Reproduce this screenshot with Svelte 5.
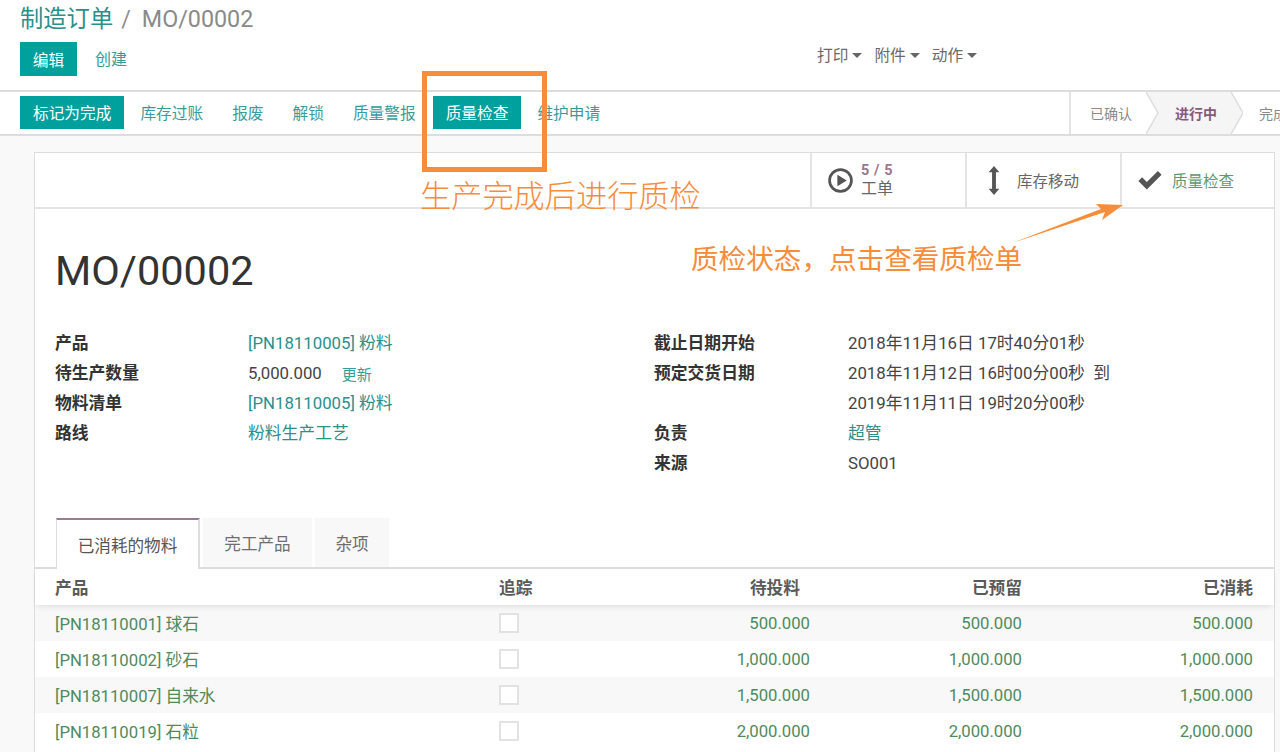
<script lang="ts">
  const buttons = ['库存过账', '报废', '解锁', '质量警报'];

  const leftFields = [
    { label: '产品', value: '[PN18110005] 粉料', link: true },
    { label: '待生产数量', value: '5,000.000', update: true },
    { label: '物料清单', value: '[PN18110005] 粉料', link: true },
    { label: '路线', value: '粉料生产工艺', link: true },
  ];

  const rightFields = [
    { label: '截止日期开始', value: '2018年11月16日 17时40分01秒' },
    { label: '预定交货日期', value: '2018年11月12日 16时00分00秒  到' },
    { label: '', value: '2019年11月11日 19时20分00秒' },
    { label: '负责', value: '超管', link: true },
    { label: '来源', value: 'SO001' },
  ];

  const rows = [
    { name: '[PN18110001] 球石', qty: '500.000' },
    { name: '[PN18110002] 砂石', qty: '1,000.000' },
    { name: '[PN18110007] 自来水', qty: '1,500.000' },
    { name: '[PN18110019] 石粒', qty: '2,000.000' },
  ];
</script>

<div class="page">
  <header class="control">
    <div class="crumbs">
      <span class="crumb-link">制造订单</span>
      <span class="crumb-sep">/</span>
      <span class="crumb-cur">MO/00002</span>
    </div>
    <div class="control-row">
      <div class="left-btns">
        <button class="btn primary edit">编辑</button>
        <button class="btn link">创建</button>
      </div>
      <div class="sidebar-menus">
        {#each ['打印', '附件', '动作'] as m}
          <span class="menu">{m}<i class="caret"></i></span>
        {/each}
      </div>
    </div>
  </header>

  <div class="statusbar">
    <div class="actions">
      <button class="btn primary act">标记为完成</button>
      {#each buttons as b}
        <button class="btn link act">{b}</button>
      {/each}
      <button class="btn primary act check">质量检查</button>
      <button class="btn link act">维护申请</button>
    </div>
    <div class="stages">
      <span class="stage first">已确认</span>
      <span class="stage current">
        <svg class="chevron" viewBox="0 0 97 42" width="97" height="42">
          <path d="M0 0 L12 21 L0 42 H85 L97 21 L85 0 Z" fill="#f5f5f5" />
          <path d="M0 0 L12 21 L0 42 M85 0 L97 21 L85 42" fill="none" stroke="#ddd" stroke-width="1.500" />
        </svg>
        <span class="stage-text">进行中</span>
      </span>
      <span class="stage last">完成</span>
    </div>
  </div>

  <main class="sheet-bg">
    <section class="sheet">
      <div class="button-box">
        <div class="stat">
          <svg class="ic" viewBox="0 0 24 24" width="25" height="25">
            <circle cx="12" cy="12" r="10.500" fill="none" stroke="#555" stroke-width="2.600" />
            <path d="M9 6.500 L18 12 L9 17.500 Z" fill="#555" />
          </svg>
          <span class="stat-text">
            <b class="stat-num">5 / 5</b>
            <span>工单</span>
          </span>
        </div>
        <div class="stat">
          <svg class="ic" viewBox="0 0 14 30" width="14" height="29">
            <path d="M7 0 L12.500 6.500 H9 V23.500 H12.500 L7 30 L1.500 23.500 H5 V6.500 H1.500 Z" fill="#555" />
          </svg>
          <span class="stat-label">库存移动</span>
        </div>
        <div class="stat">
          <svg class="ic" viewBox="2 1 22 18" width="24" height="19">
            <path d="M2 10.500 L5.500 7 L10 11.500 L20.500 1 L24 4.500 L10 18.500 Z" fill="#555" />
          </svg>
          <span class="stat-label good">质量检查</span>
        </div>
      </div>

      <h1 class="title">MO/00002</h1>

      <div class="groups">
        <div class="group">
          {#each leftFields as f}
            <div class="field">
              <span class="f-label">{f.label}</span>
              <span class="f-value" class:f-link={f.link}>{f.value}</span>
              {#if f.update}<span class="f-update">更新</span>{/if}
            </div>
          {/each}
        </div>
        <div class="group right">
          {#each rightFields as f}
            <div class="field">
              <span class="f-label">{f.label}</span>
              <span class="f-value" class:f-link={f.link}>{f.value}</span>
            </div>
          {/each}
        </div>
      </div>

      <div class="tabs">
        <span class="tab active">已消耗的物料</span>
        <span class="tab">完工产品</span>
        <span class="tab">杂项</span>
      </div>

      <table class="lines">
        <thead>
          <tr>
            <th class="c-name">产品</th>
            <th class="c-track">追踪</th>
            <th class="num c-todo">待投料</th>
            <th class="num c-res">已预留</th>
            <th class="num c-done">已消耗</th>
          </tr>
        </thead>
        <tbody>
          {#each rows as r}
            <tr>
              <td class="c-name">{r.name}</td>
              <td class="c-track"><span class="box"></span></td>
              <td class="num">{r.qty}</td>
              <td class="num">{r.qty}</td>
              <td class="num">{r.qty}</td>
            </tr>
          {/each}
        </tbody>
      </table>
    </section>
  </main>

  <!-- annotations drawn over the screenshot -->
  <div class="mark-box"></div>
  <div class="note note-a">生产完成后进行质检</div>
  <div class="note note-b">质检状态，点击查看质检单</div>
  <svg class="arrow" viewBox="0 0 120 50" width="120" height="50">
    <path d="M1 43 L94 12 L91 20 L112 5 L85 4 L90 9 Z" fill="#f78c3b" />
  </svg>
</div>

<style>
  :global(body) {
    margin: 0;
    background: #fff;
  }

  .page {
    position: relative;
    width: 1280px;
    height: 752px;
    overflow: hidden;
    font-family: Roboto, 'Noto Sans CJK SC', sans-serif;
    font-size: 15.700px;
    color: #4c4c4c;
  }

  .control {
    height: 92px;
    box-sizing: border-box;
    padding: 0 20px;
    border-bottom: 2px solid #ddd;
  }

  .crumbs {
    display: flex;
    align-items: center;
    height: 38px;
    font-size: 23.300px;
    line-height: 38px;
  }

  .crumb-link {
    color: #2b8f8c;
  }

  .crumb-sep {
    margin: 0 11px 0 8px;
    color: #8f8f8f;
  }

  .crumb-cur {
    color: #8a8a8a;
  }

  .control-row {
    display: flex;
    margin-top: 4px;
  }

  .left-btns {
    display: flex;
    width: 797px;
  }

  .btn {
    border: 0;
    padding: 0;
    background: transparent;
    font: inherit;
  }

  .primary {
    background: #00a09d;
    color: #fff;
  }

  .link {
    color: #3a9c99;
  }

  .edit {
    width: 57px;
    height: 34px;
  }

  .left-btns .link {
    margin-left: 18px;
    height: 35px;
    line-height: 35px;
    font-size: 16px;
  }

  .sidebar-menus {
    display: flex;
    gap: 12px;
    height: 27px;
    margin-top: -1px;
    align-items: center;
    color: #6a6a6a;
  }

  .menu {
    display: flex;
    align-items: center;
    gap: 4px;
  }

  .caret {
    width: 0;
    height: 0;
    border-left: 5px solid transparent;
    border-right: 5px solid transparent;
    border-top: 5px solid #666;
    margin-top: 2px;
  }

  .statusbar {
    display: flex;
    justify-content: space-between;
    height: 44px;
    box-sizing: border-box;
    border-bottom: 2px solid #ddd;
  }

  .actions {
    display: flex;
    align-items: center;
    padding-left: 20px;
    margin-top: -1px;
  }

  .act {
    height: 33px;
    white-space: nowrap;
    padding: 0 13px;
  }

  .link.act {
    padding: 0 14.500px;
  }

  .primary.act + .link.act {
    margin-left: 1.500px;
  }

  .check {
    margin-left: 2.500px;
    padding: 0 13px;
  }

  .stages {
    display: flex;
    width: 211px;
    flex: none;
    border-left: 2px solid #e4e4e4;
    box-sizing: border-box;
    font-size: 14px;
    color: #8a8a8a;
  }

  .stage {
    display: flex;
    flex: none;
    align-items: center;
    white-space: nowrap;
  }

  .first {
    width: 75px;
    padding-left: 19px;
    box-sizing: border-box;
  }

  .current {
    position: relative;
    width: 97px;
    padding-left: 29px;
    box-sizing: border-box;
    color: #875a7b;
    font-weight: 700;
  }

  .chevron {
    position: absolute;
    left: 0;
    top: 0;
  }

  .stage-text {
    position: relative;
  }

  .last {
    padding-left: 16px;
  }

  .sheet-bg {
    height: 616px;
    background: #f9f9f9;
    padding: 16px 5px 0 34px;
    box-sizing: border-box;
    overflow: hidden;
  }

  .sheet {
    background: #fff;
    border: 1px solid #ddd;
    height: 640px;
    box-sizing: border-box;
  }

  .button-box {
    display: flex;
    justify-content: flex-end;
    height: 56px;
    box-sizing: border-box;
    border-bottom: 2px solid #e4e4e4;
    padding-right: 26px;
  }

  .stat {
    display: flex;
    align-items: center;
    width: 155px;
    box-sizing: border-box;
    border-left: 2px solid #e4e4e4;
    padding-left: 16px;
    gap: 9px;
    font-size: 15.500px;
    color: #666;
  }

  .stat:last-child {
    width: 128px;
    gap: 10px;
  }

  .stat:nth-child(2) {
    padding-left: 20px;
  }

  .stat:nth-child(2) .ic {
    margin-right: 7px;
  }

  .stat-text {
    display: flex;
    flex-direction: column;
    line-height: 18px;
    font-size: 16px;
    margin-left: -1px;
  }

  .stat-num {
    color: #9a7590;
    font-size: 14.500px;
    font-weight: 700;
    letter-spacing: 0.600px;
  }

  .good {
    color: #5f9a6f;
  }

  .title {
    margin: 36px 0 0 20px;
    font-size: 41.500px;
    font-weight: 400;
    line-height: 52px;
    color: #333;
  }

  .groups {
    display: flex;
    margin: 31px 0 0 20px;
    height: 161px;
    font-size: 16.800px;
  }

  .group {
    width: 599px;
  }

  .field {
    display: flex;
    height: 30px;
    line-height: 30px;
  }

  .f-label {
    width: 193px;
    font-weight: 700;
    color: #333;
    flex: none;
  }

  .right .f-label {
    width: 194px;
  }

  .f-value {
    white-space: pre;
    color: #444;
  }

  .f-link {
    color: #2b8f8c;
  }

  .f-update {
    margin: 2px 0 0 20px;
    font-size: 15px;
    color: #3a9c99;
  }

  .tabs {
    display: flex;
    gap: 3px;
    height: 51px;
    margin-top: 29px;
    padding-left: 21px;
    border-bottom: 2px solid #ddd;
    box-sizing: border-box;
    font-size: 16.600px;
  }

  .tab {
    display: flex;
    align-items: center;
    justify-content: center;
    width: 109px;
    height: 49px;
    background: #f8f8f8;
    color: #6e6e6e;
  }

  .tab:last-child {
    width: 74px;
  }

  .tab.active {
    width: 144px;
    height: 51px;
    box-sizing: border-box;
    background: #fff;
    border-top: 2px solid #9b7a93;
    border-left: 1px solid #ddd;
    border-right: 2px solid #ddd;
    color: #555;
    position: relative;
    z-index: 1;
  }

  .lines {
    width: 100%;
    border-collapse: collapse;
    table-layout: fixed;
    font-size: 16.700px;
  }

  .lines thead tr {
    position: relative;
    box-shadow: 0 3px 6px -2px rgba(0, 0, 0, 0.12);
  }

  .lines th {
    height: 36px;
    font-weight: 700;
    color: #5a5a5a;
    text-align: left;
    padding: 0;
  }

  .lines td {
    height: 36px;
    padding: 0;
    color: #4f8a5c;
  }

  .lines tbody tr:nth-child(odd) {
    background: #f8f8f8;
  }

  .c-name {
    width: 444px;
    padding-left: 20px !important;
  }

  .c-track {
    width: 120px;
  }

  .c-todo {
    width: 191px;
  }

  .c-res {
    width: 191px;
  }

  .num {
    text-align: right !important;
    padding-right: 21px !important;
  }

  th.c-todo {
    padding-right: 31px !important;
    box-sizing: content-box;
    width: 181px;
  }

  .box {
    display: block;
    width: 16px;
    height: 16px;
    background: #fff;
    border: 2px solid #e2e2e2;
  }

  .mark-box {
    position: absolute;
    left: 422px;
    top: 71px;
    width: 115px;
    height: 91px;
    border: 5.500px solid #f78c3b;
  }

  .note {
    position: absolute;
    white-space: nowrap;
    color: #f78c3b;
  }

  .note-a {
    left: 420px;
    top: 174px;
    font-size: 31.200px;
    line-height: 40px;
    font-weight: 300;
    font-family: 'Noto Sans CJK SC', sans-serif;
  }

  .note-b {
    left: 691px;
    top: 239px;
    font-size: 27.600px;
    line-height: 36px;
    font-family: 'Noto Sans CJK SC', sans-serif;
  }

  .arrow {
    position: absolute;
    left: 1011px;
    top: 200px;
  }
</style>
